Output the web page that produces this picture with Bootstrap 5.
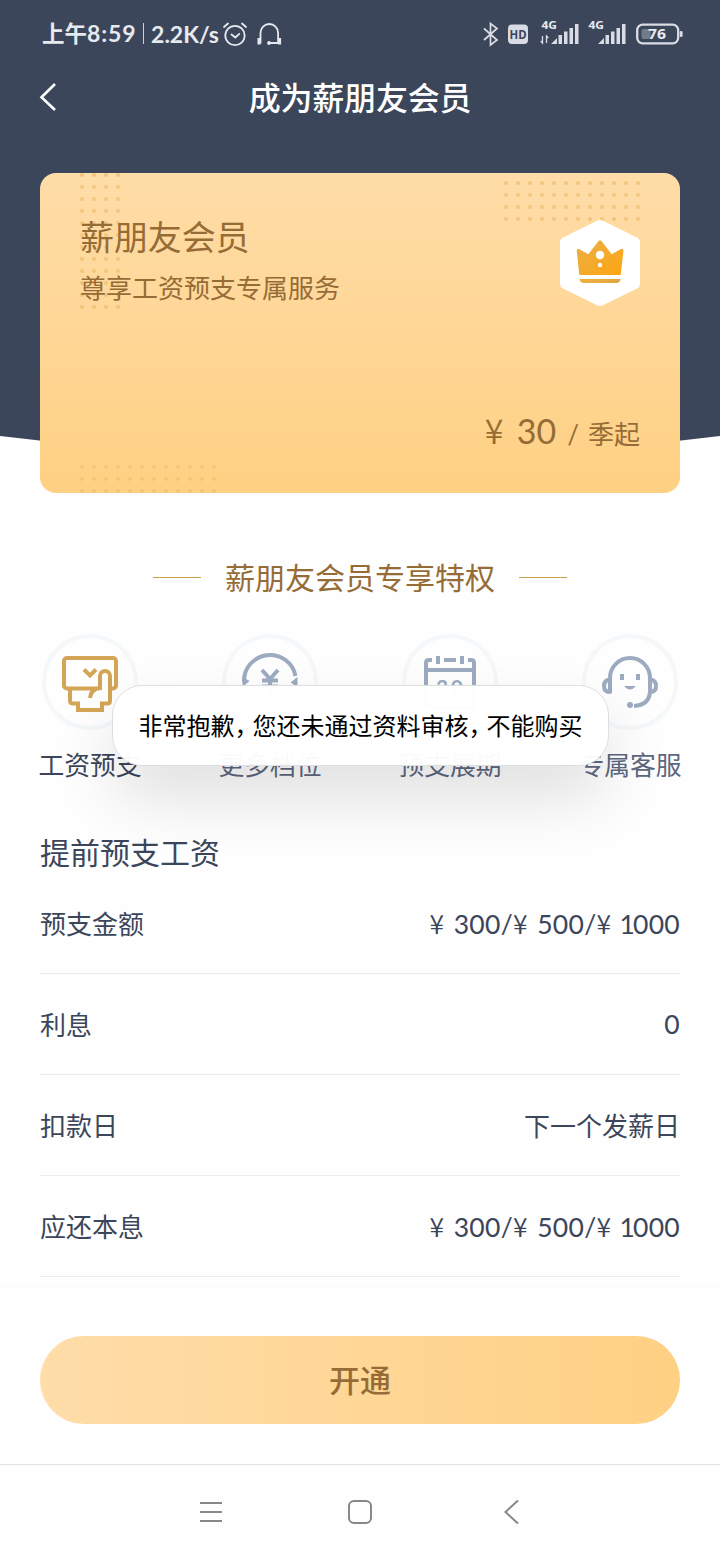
<!DOCTYPE html>
<html lang="zh-CN">
<head>
<meta charset="utf-8">
<meta name="viewport" content="width=device-width, initial-scale=1">
<title>成为薪朋友会员</title>
<link rel="stylesheet" href="https://cdn.jsdelivr.net/npm/bootstrap@5.3.0/dist/css/bootstrap.min.css">
<style>
  body { font-family: Lato, "Noto Sans CJK SC", sans-serif; color: #3c465a; background: #fefefe; font-size: 26px; line-height: 40px; }
  .screen { width: 720px; height: 1560px; }
  .hero { height: 493px; }
  .hero::before { content: ""; position: absolute; inset: 0; background: #3c465a; clip-path: path("M0 0H720V436Q360 481 0 436Z"); }
  .statusbar { height: 67px; padding-left: 42px; padding-right: 37px; color: #e6e9f0; font-size: 23px; font-weight: 700; }
  .clock { letter-spacing: .9px; }
  .clock .han { font-weight: 700; font-size: 22.5px; letter-spacing: 0; }
  .divider { width: 1.5px; height: 21px; background: #cdd1da; margin: 0 7px 0 6px; }
  .alarm { margin-left: 3px; }
  .headset { margin-left: 7px; }
  .titlebar { height: 60px; margin-top: 1px; font-size: 32px; font-weight: 500; letter-spacing: -.2px; }
  .titlebar svg { left: 36px; top: 12px; }
  .member { margin: 45px 40px 0; height: 320px; border-radius: 16px; padding: 40px; background: linear-gradient(#ffdda8, #fed083); color: #966c36; border: 0; }
  .member h2 { font-size: 34px; line-height: 48px; font-weight: 400; margin: 0; letter-spacing: -.1px; }
  .subtitle { padding-top: 7px; }
  .price { font-size: 34px; line-height: 40px; margin-bottom: -1px; }
  .price .per { font-size: 26px; margin-left: 11px; }
  .price .unit { margin-left: 9px; font-size: 26px; }
  .yen { font-family: "Noto Sans CJK SC", sans-serif; font-weight: 350; display: inline-block; white-space: pre; }
  .price .yen { width: 32px; }
  .dots { inset: 0; }
  .privileges { margin-top: 60px; font-size: 30px; line-height: 48px; color: #966c36; }
  .privileges .rule { width: 48px; height: 1px; background: #c9a24e; }
  .perk { color: #5d6780; }
  .perk.chosen { color: #3c465a; }
  .perk-ring { width: 96px; height: 96px; border-radius: 50%; border: 4px solid #f5f8fa; }
  .perk-ring svg { margin: -4px; color: #9dabc0; display: block; }
  .perk.chosen svg { color: #d4a556; }
  .perks { margin-top: 33px; }
  .perk-name { margin-top: 15px; font-size: 25.8px; }
  .details { padding: 0 40px; margin-top: 47px; }
  .details h3 { font-size: 30px; line-height: 40px; font-weight: 400; margin: 0 0 1px; }
  .detail { height: 101px; padding-top: 2px; border-bottom: 1px solid #e8ecee; }
  .detail .yen { width: 24.2px; }
  .figures { font-size: 26.5px; letter-spacing: .3px; padding-bottom: 2px; }
  .figures .one { letter-spacing: -2px; margin-left: -1px; }
  .buy { height: 180px; margin-top: 8px; padding: 51px 40px 40px; border-bottom: 1px solid #e2e2e2; box-shadow: inset 0 3px 0 #fafbfb; }
  .buy .btn { height: 88px; color: #966c36; font-size: 31px; font-weight: 500; background: linear-gradient(90deg, #ffdda9, #fed083); border: 0; }
  .sysnav { height: 94px; }
  .sysnav svg { color: #888; }
  .notice { left: 112px; top: 685px; width: 497px; height: 81px; border-radius: 30px; background: rgba(255,255,255,.97); border: 1px solid #dcdee0; box-shadow: 0 32px 64px rgba(0,0,0,.12); color: #000; font-size: 24px; white-space: nowrap; }
  .notice .comma { letter-spacing: -6px; }
</style>
</head>
<body>
<main class="screen position-relative overflow-hidden d-flex flex-column">
  <header class="hero position-relative flex-shrink-0">
    <div class="statusbar position-relative d-flex align-items-center">
      <span class="clock"><span class="han">上午</span>8:59</span>
      <span class="divider"></span>
      <span class="rate">2.2K/s</span>
      <svg class="alarm" width="26" height="26" viewBox="0 0 26 26" fill="none" stroke="currentColor" stroke-width="1.8" stroke-linecap="round"><circle cx="13" cy="14.500" r="9.700"/><path d="M2 6 6 2.500M24 6 20 2.500M9.500 13.500l3.800 3 4-3.600"/></svg>
      <svg class="headset" width="28" height="26" viewBox="0 0 28 26" fill="none" stroke="currentColor" stroke-width="1.8"><path d="M5.500 22.500V12a8.800 9 0 0 1 17.600 0V22.500M14 22H23"/><path d="M4 17v6.500M24.600 17v6.500" stroke-width="3"/><circle cx="14" cy="22" r="1.900" fill="currentColor" stroke="none"/></svg>
      <svg class="ms-auto" width="202" height="34" viewBox="481 17 202 34" fill="none" stroke="#d9dce4">
        <path d="M484 28.500 497 40 490.500 45V23.500L497 28.500 484 40" stroke-width="1.700"/>
        <rect x="508" y="24.500" width="20" height="19.500" rx="4" fill="#d9dce4" stroke="none"/>
        <g fill="#e6e9f0" stroke="none" font-family="Open Sans" font-weight="700">
          <text x="509.500" y="39" font-size="12.500" textLength="17" lengthAdjust="spacingAndGlyphs" fill="#3c465a">HD</text>
          <text x="541.500" y="29" font-size="10.500" textLength="15.500" lengthAdjust="spacingAndGlyphs">4G</text>
          <text x="588.500" y="29" font-size="10.500" textLength="15.500" lengthAdjust="spacingAndGlyphs">4G</text>
          <text x="648" y="39" font-size="15" textLength="18" lengthAdjust="spacingAndGlyphs">76</text>
        </g>
        <path d="M542.500 36v7l-1.800-2M546.500 43v-7l1.800 2" stroke-width="1.300"/>
        <g fill="#d9dce4" stroke="none">
          <path d="M551 44 557 38V44ZM558.500 35h3.500v9h-3.500ZM564 31.500h3.500V44H564ZM569.500 28h3.500v16h-3.500ZM575 24h3.500v20H575Z"/>
          <path d="M598 44 604 38V44ZM605.500 35h3.500v9h-3.500ZM611 31.500h3.500V44H611ZM616.500 28h3.500v16h-3.500ZM622 24h3.500v20H622Z"/>
          <rect x="641.500" y="29" width="9" height="10" rx="2" opacity=".35"/>
          <rect x="679.800" y="31" width="2.800" height="6" rx="1.300"/>
        </g>
        <rect x="637.200" y="24.700" width="41" height="18.600" rx="5.500" stroke-width="2.300"/>
      </svg>
    </div>
    <div class="titlebar position-relative d-flex align-items-center justify-content-center text-white">
      <svg class="position-absolute" width="24" height="34" viewBox="0 0 24 34" fill="none" stroke="currentColor" stroke-width="2.600"><path d="M19 4 5.500 17.200 19 30"/></svg>
      <span>成为薪朋友会员</span>
    </div>
    <section class="card member position-relative overflow-hidden">
      <svg class="dots position-absolute" width="640" height="320">
        <defs><pattern id="dotgrid" width="12" height="12" patternUnits="userSpaceOnUse"><circle cx="6" cy="6" r="2" fill="#e9b862" fill-opacity=".6"/></pattern></defs>
        <rect width="48" height="144" fill="url(#dotgrid)" transform="translate(36 -4)"/>
        <rect width="144" height="48" fill="url(#dotgrid)" transform="translate(460 4)"/>
        <rect width="144" height="36" fill="url(#dotgrid)" transform="translate(36 288)" opacity=".75"/>
      </svg>
      <div class="d-flex justify-content-between position-relative">
        <div><h2>薪朋友会员</h2><div class="subtitle">尊享工资预支专属服务</div></div>
        <svg class="crest" width="80" height="100" viewBox="0 -7 80 100">
          <defs><linearGradient id="gold" x2="1" y2="1"><stop stop-color="#e8b04a"/><stop offset="1" stop-color="#ffa50f"/></linearGradient><linearGradient id="band"><stop stop-color="#efb23e"/><stop offset="1" stop-color="#dfa640"/></linearGradient></defs>
          <path d="M36.500 1Q40-1 43.500 1L77 17.500Q80 19 80 22.500V63.500Q80 67 77 68.500L43.500 85Q40 87 36.500 85L3 68.500Q0 67 0 63.500V22.500Q0 19 3 17.500Z" fill="#fff"/>
          <path d="M19.300 55 16.700 30.500Q17 28.300 19 29L28.300 34.300 38.500 21Q40 19.300 41.500 21L51.700 34.300 61 29Q63.400 28.300 63.500 30.500L60.700 55Z" fill="url(#gold)"/>
          <circle cx="40" cy="35" r="4.200" fill="#fff"/><circle cx="40" cy="45" r="2.200" fill="#fff"/>
          <path d="M19.500 59H60.500Q60 63 56.500 63H23.500Q20 63 19.500 59Z" fill="url(#band)"/>
        </svg>
      </div>
      <div class="price mt-auto d-flex justify-content-end align-items-baseline position-relative"><span class="yen">¥ </span><span>30</span><span class="per">/</span><span class="unit">季起</span></div>
    </section>
  </header>

  <div class="privileges d-flex align-items-center justify-content-center gap-4"><span class="rule"></span><span>薪朋友会员专享特权</span><span class="rule"></span></div>

  <nav class="perks row g-0 text-center">
    <div class="col-3 perk chosen d-flex flex-column align-items-center">
      <div class="perk-ring"><svg width="96" height="96" fill="none" stroke="currentColor" stroke-width="4"><path d="M58 54.500H25a3 3 0 0 1-3-3V27a3 3 0 0 1 3-3H71a3 3 0 0 1 3 3V51.500a3 3 0 0 1-3 3H68M42 35.500 48 41.500 54 35.500M58 56V42a5 5 0 0 1 10 0V67Q68 69.500 65 69.500H60V76H36V69.500H31Q28 69.500 28 66.500V55M58 54Q49 55 48 64"/></svg></div>
      <div class="perk-name">工资预支</div>
    </div>
    <div class="col-3 perk d-flex flex-column align-items-center">
      <div class="perk-ring"><svg width="96" height="96" fill="none" stroke="currentColor" stroke-width="4"><path d="M22 48A26 26 0 0 1 73.500 42"/><path d="M20.500 43 27.500 47 20.500 53ZM75.500 43 68.500 48.500 75.500 53Z" fill="currentColor" stroke="none"/><path d="M40 36 48 45 56 36M40 46.500H56M40 52.500H56M48 45V60"/></svg></div>
      <div class="perk-name">更多档位</div>
    </div>
    <div class="col-3 perk d-flex flex-column align-items-center">
      <div class="perk-ring"><svg width="96" height="96" fill="none" stroke="currentColor" stroke-width="4"><path d="M30 26H27Q24 26 24 29V71Q24 73 26 73H70Q72 73 72 71V29Q72 26 69 26H66M24 36H72M36 22V30M42 26H54M60 22V30"/><text x="34" y="61" font-size="21" font-weight="700" textLength="27" fill="currentColor" stroke="none">30</text></svg></div>
      <div class="perk-name">预支展期</div>
    </div>
    <div class="col-3 perk d-flex flex-column align-items-center">
      <div class="perk-ring"><svg width="96" height="96" fill="none" stroke="currentColor" stroke-width="4"><path d="M28 59.500V44A20 20 0 0 1 68 44V58Q67 71 52 72M28 45.500Q22 46 22 52T28 58M68 45.500Q74 46 74 52T68 58"/><path d="M38 40h4v6h-4ZM54 40h4v6h-4ZM42 52H54Q48 59 42 52Z" fill="currentColor" stroke="none"/><circle cx="48" cy="71" r="3" fill="currentColor" stroke="none"/></svg></div>
      <div class="perk-name">专属客服</div>
    </div>
  </nav>

  <section class="details">
    <h3>提前预支工资</h3>
    <div class="detail d-flex align-items-center justify-content-between"><span>预支金额</span><span class="figures"><span class="yen">¥ </span>300/<span class="yen">¥ </span>500/<span class="yen">¥ </span><span class="one">1</span>000</span></div>
    <div class="detail d-flex align-items-center justify-content-between"><span>利息</span><span class="figures">0</span></div>
    <div class="detail d-flex align-items-center justify-content-between"><span>扣款日</span><span>下一个发薪日</span></div>
    <div class="detail d-flex align-items-center justify-content-between"><span>应还本息</span><span class="figures"><span class="yen">¥ </span>300/<span class="yen">¥ </span>500/<span class="yen">¥ </span><span class="one">1</span>000</span></div>
  </section>

  <div class="buy"><button type="button" class="btn w-100 rounded-pill">开通</button></div>

  <footer class="sysnav position-relative d-flex align-items-center justify-content-center">
    <svg width="324" height="28" viewBox="198 1498 324 28" fill="none" stroke="currentColor" stroke-width="2"><path d="M200 1503H222M200 1512H222M200 1521H222"/><rect x="349" y="1501" width="22" height="22" rx="5"/><path d="M518 1500.500 505.500 1512 518 1523.500"/></svg>
  </footer>

  <div class="notice position-absolute d-flex align-items-center justify-content-center" role="status"><span>非常抱歉<span class="comma">，</span>您还未通过资料审核<span class="comma">，</span>不能购买</span></div>
</main>
<script src="https://cdn.jsdelivr.net/npm/bootstrap@5.3.0/dist/js/bootstrap.bundle.min.js"></script>
</body>
</html>
